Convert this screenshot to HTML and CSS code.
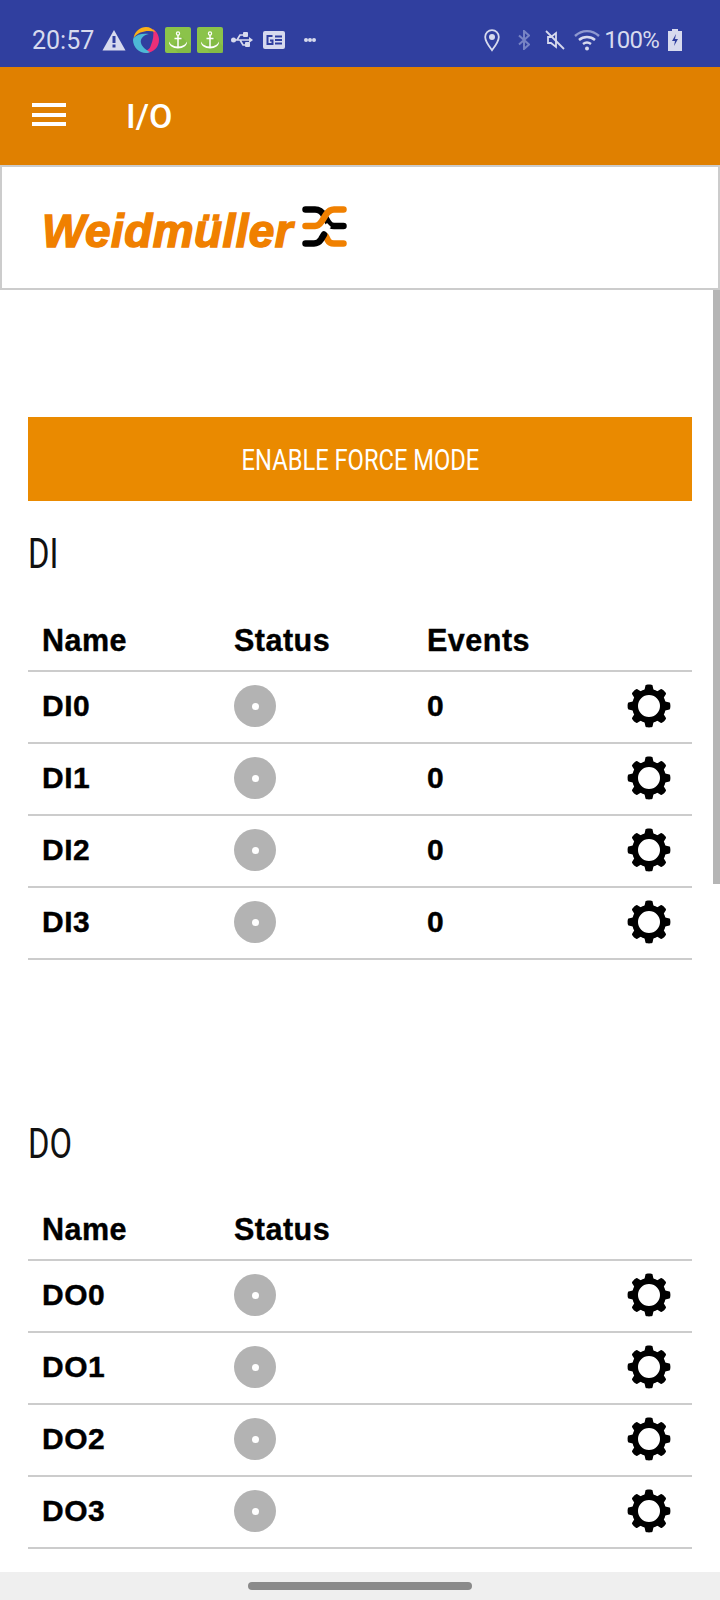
FILE: index.html
```html
<!DOCTYPE html>
<html lang="en">
<head>
    <meta charset="UTF-8">
    <meta name="viewport" content="width=device-width, initial-scale=1.0">
    <title>I/O</title>
    <link rel="stylesheet" href="styles.css">
</head>
<body>

<svg class="defs" width="0" height="0">
    <symbol id="gear" viewBox="0 0 44 44">
        <circle cx="22" cy="22" r="14" fill="none" stroke="#000" stroke-width="6"/>
        <g fill="#000">
            <path d="M17 8l1.500-6.500c.3-1.200 6.700-1.200 7 0L27 8z"/>
            <path d="M17 8l1.500-6.500c.3-1.200 6.700-1.200 7 0L27 8z" transform="rotate(45 22 22)"/>
            <path d="M17 8l1.500-6.500c.3-1.200 6.700-1.200 7 0L27 8z" transform="rotate(90 22 22)"/>
            <path d="M17 8l1.500-6.500c.3-1.200 6.700-1.200 7 0L27 8z" transform="rotate(135 22 22)"/>
            <path d="M17 8l1.500-6.500c.3-1.200 6.700-1.200 7 0L27 8z" transform="rotate(180 22 22)"/>
            <path d="M17 8l1.500-6.500c.3-1.200 6.700-1.200 7 0L27 8z" transform="rotate(225 22 22)"/>
            <path d="M17 8l1.500-6.500c.3-1.200 6.700-1.200 7 0L27 8z" transform="rotate(270 22 22)"/>
            <path d="M17 8l1.500-6.500c.3-1.200 6.700-1.200 7 0L27 8z" transform="rotate(315 22 22)"/>
        </g>
    </symbol>
    <symbol id="anchor" viewBox="0 0 26 26">
        <rect width="26" height="26" rx="2" fill="#8bc34a"/>
        <path d="M26 26H13L8 19l8-10 10 10z" fill="#7cb342" opacity=".5"/>
        <circle cx="13" cy="6.500" r="1.600" fill="none" stroke="#fff" stroke-width="1.200"/>
        <path d="M13 8v13M9.500 11.500h7" fill="none" stroke="#fff" stroke-width="1.500"/>
        <path d="M4 14.500c1 2 2 3 3 3.500 2 1 4 1.500 6 1.500s4-.5 6-1.500c1-.5 2-1.500 3-3.500 .5 4-4 7-9 7s-9.500-3-9-7z" fill="#fff"/>
    </symbol>
</svg>

<div class="status-bar">
    <span class="clock">20:57</span>
    <svg class="st-warn" width="24" height="22" viewBox="0 0 24 22"><path d="M12 1 23.500 21.500H.500z" fill="#d7daee"/><rect x="10.500" y="7" width="3" height="7" fill="#303f9f"/><rect x="10.500" y="15.500" width="3" height="3" fill="#303f9f"/></svg>
    <svg class="st-swirl" width="26" height="26" viewBox="0 0 26 26">
        <path d="M20 2c4 2.500 6 7 6 11 0 7-5 12-12 13-2 0-3-1-4-2 5 0 7-2.500 8-6 2-5 3-10 2-16z" fill="#ec2f78"/>
        <path d="M.500 11C2 4 7 0 13 0c4 0 7 2 9.500 5C15 3 6 4 .500 11z" fill="#fbb017"/>
        <path d="M.500 11C4 7 10 6 16 7 10 8 7 12 8 16c1 4 5 7 9 9-2 1-3 1-4 1C6 26 0 20 0 13z" fill="#4db9d6"/>
    </svg>
    <svg class="st-app" width="26" height="26"><use href="#anchor"/></svg>
    <svg class="st-app" width="26" height="26"><use href="#anchor"/></svg>
    <svg class="st-usb" width="22" height="16" viewBox="0 0 22 16"><path d="M2 8h18M6 8l3-5h4M9 8l3 5h3" fill="none" stroke="#d7daee" stroke-width="1.700"/><circle cx="2.500" cy="8" r="2.500" fill="#d7daee"/><rect x="12" y="0" width="5" height="5" rx="1" fill="#d7daee"/><rect x="14" y="10" width="5" height="5" rx="1" fill="#d7daee"/><path d="M18 5l4 3-4 3z" fill="#d7daee"/></svg>
    <svg class="st-news" width="22" height="18" viewBox="0 0 22 18"><rect width="22" height="18" rx="2" fill="#d7daee"/><rect x="12" y="4.500" width="7" height="2" fill="#303f9f"/><rect x="12" y="8" width="7" height="2" fill="#303f9f"/><rect x="12" y="11.500" width="7" height="2" fill="#303f9f"/><path d="M9.500 5H4.500v8h5V9.500H7" fill="none" stroke="#303f9f" stroke-width="2"/></svg>
    <svg class="st-more" width="12" height="6" viewBox="0 0 12 6"><circle cx="2" cy="3" r="2" fill="#d7daee"/><circle cx="6" cy="3" r="2" fill="#d7daee"/><circle cx="10" cy="3" r="2" fill="#d7daee"/></svg>
    <span class="status-space"></span>
    <svg class="st-pin" width="16" height="23" viewBox="0 0 16 23"><path d="M8 1.200c3.800 0 6.800 3 6.800 6.800 0 4.500-4 9.500-6.800 13.200C5.200 17.500 1.200 12.500 1.200 8 1.200 4.200 4.200 1.200 8 1.200z" fill="none" stroke="#d7daee" stroke-width="1.800"/><circle cx="8" cy="8" r="3" fill="#d7daee"/></svg>
    <svg class="st-bt" width="12" height="20" viewBox="0 0 12 20"><path d="M1 5.500l10 9L6 19V1l5 4.500-10 9" fill="none" stroke="#7884c4" stroke-width="2"/></svg>
    <svg class="st-mute" width="20" height="20" viewBox="0 0 20 20"><path d="M3 7v6h3l5 4V3L6 7z" fill="none" stroke="#d7daee" stroke-width="1.800"/><path d="M1 1l18 18" stroke="#d7daee" stroke-width="1.800"/></svg>
    <svg class="st-wifi" width="26" height="22" viewBox="0 0 26 22"><path d="M1 7c7-6.500 17-6.500 24 0" fill="none" stroke="#8f99d0" stroke-width="2.400"/><path d="M5 11c4.500-4 11.500-4 16 0M9 15c2.500-2 5.500-2 8 0" fill="none" stroke="#d7daee" stroke-width="2.400"/><circle cx="13" cy="19.500" r="2" fill="#d7daee"/></svg>
    <span class="battery-pct">100%</span>
    <svg class="st-batt" width="14" height="22" viewBox="0 0 14 22"><path d="M4 0h6v2h4v20H0V2h4z" fill="#d7daee"/><path d="M8 5 4 12h3l-1 5 4-7H7z" fill="#303f9f"/></svg>
</div>

<div class="app-bar">
    <div class="menu-icon"><span></span><span></span><span></span></div>
    <div class="app-title">I/O</div>
</div>

<div class="logo-box">
    <span class="logo-text">Weidmüller</span>
    <svg class="logo-mark" width="45" height="41" viewBox="0 0 45 41">
        <g fill="none" stroke-width="6.500" stroke-linecap="round">
            <path d="M3.500 3.500h9.500c4 0 7 2 9 6l4 6.500c1 2 3 4 6 4h9.500" stroke="#000"/>
            <path d="M41.500 3.500H32c-4 0-6 2-8 5l-4 6.500c-2 3-4 5-7 5H3.500" stroke="#f08000"/>
            <path d="M41.500 37.500H32c-3 0-5-1-6-3l-2-4" stroke="#f08000"/>
            <path d="M3.500 37.500H12c3 0 5-1 7-4l3-5" stroke="#000"/>
        </g>
        <path d="M25 17l4 4-4 4-4-4z" fill="#fff"/>
    </svg>
</div>

<div class="scroll-thumb"></div>

<div class="content">
    <button class="force-btn"><span class="narrow">ENABLE FORCE MODE</span></button>

    <h2 class="section-title"><span class="narrow">DI</span></h2>
    <table class="io-table">
        <tr><th class="col-name">Name</th><th class="col-status">Status</th><th class="col-events">Events</th><th></th></tr>
        <tr>
            <td>DI0</td>
            <td><span class="led"></span></td>
            <td>0</td>
            <td class="col-gear"><svg class="gear" width="44" height="44"><use href="#gear"/></svg></td>
        </tr>
        <tr>
            <td>DI1</td>
            <td><span class="led"></span></td>
            <td>0</td>
            <td class="col-gear"><svg class="gear" width="44" height="44"><use href="#gear"/></svg></td>
        </tr>
        <tr>
            <td>DI2</td>
            <td><span class="led"></span></td>
            <td>0</td>
            <td class="col-gear"><svg class="gear" width="44" height="44"><use href="#gear"/></svg></td>
        </tr>
        <tr>
            <td>DI3</td>
            <td><span class="led"></span></td>
            <td>0</td>
            <td class="col-gear"><svg class="gear" width="44" height="44"><use href="#gear"/></svg></td>
        </tr>
    </table>

    <h2 class="section-title section-do"><span class="narrow">DO</span></h2>
    <table class="io-table">
        <tr><th class="col-name">Name</th><th class="col-status">Status</th><th class="col-events"></th><th></th></tr>
        <tr>
            <td>DO0</td>
            <td><span class="led"></span></td>
            <td></td>
            <td class="col-gear"><svg class="gear" width="44" height="44"><use href="#gear"/></svg></td>
        </tr>
        <tr>
            <td>DO1</td>
            <td><span class="led"></span></td>
            <td></td>
            <td class="col-gear"><svg class="gear" width="44" height="44"><use href="#gear"/></svg></td>
        </tr>
        <tr>
            <td>DO2</td>
            <td><span class="led"></span></td>
            <td></td>
            <td class="col-gear"><svg class="gear" width="44" height="44"><use href="#gear"/></svg></td>
        </tr>
        <tr>
            <td>DO3</td>
            <td><span class="led"></span></td>
            <td></td>
            <td class="col-gear"><svg class="gear" width="44" height="44"><use href="#gear"/></svg></td>
        </tr>
    </table>
</div>

<div class="nav-bar"><div class="nav-pill"></div></div>

</body>
</html>
```
FILE: styles.css
```css
html, body {
    height: 1600px;
    overflow: hidden;
}
body {
    margin: 0;
    position: relative;
    display: flex;
    flex-direction: column;
    background-color: #ffffff;
    font-family: "Liberation Sans", Arial, sans-serif;
}
.defs {
    position: absolute;
}
.status-bar {
    height: 67px;
    flex: none;
    display: flex;
    align-items: center;
    padding: 13px 38px 0 32px;
    box-sizing: border-box;
    background-color: #303f9f;
    color: #d7daee;
    font-family: Roboto, sans-serif;
    font-size: 24px;
}
.status-space {
    flex: 1;
}
.clock {
    font-size: 25px;
    margin-right: 8px;
}
.st-swirl {
    margin-left: 7px;
}
.st-app {
    margin-left: 6px;
}
.st-usb {
    margin-left: 8px;
}
.st-news {
    margin-left: 10px;
}
.st-more {
    margin-left: 19px;
}
.st-bt {
    margin-left: 18px;
}
.st-mute {
    margin-left: 15px;
}
.st-wifi {
    margin-left: 9px;
}
.battery-pct {
    margin-left: 4px;
    letter-spacing: -0.800px;
}
.st-batt {
    margin-left: 9px;
}
.app-bar {
    height: 98px;
    flex: none;
    display: flex;
    align-items: center;
    background-color: #e08000;
    color: #fff;
    padding-left: 32px;
}
.menu-icon {
    width: 34px;
    margin-top: -3px;
    display: flex;
    flex-direction: column;
    gap: 5.500px;
}
.menu-icon span {
    height: 4px;
    background-color: #fff;
}
.app-title {
    margin-left: 60px;
    font-family: Roboto, sans-serif;
    font-size: 34px;
    font-weight: 500;
}
.logo-box {
    height: 125px;
    flex: none;
    box-sizing: border-box;
    border: 2px solid #cccccc;
    display: flex;
    align-items: center;
    padding-left: 40px;
    background-color: #fff;
}
.logo-text {
    color: #f08000;
    font-size: 46px;
    font-weight: bold;
    font-style: italic;
    -webkit-text-stroke: 1.500px #f08000;
    letter-spacing: 0.400px;
    margin-top: 6px;
}
.logo-mark {
    margin-left: 9px;
    margin-top: -3px;
}
.scroll-thumb {
    position: absolute;
    right: 0;
    top: 290px;
    width: 7px;
    height: 594px;
    background-color: #b5b5b5;
}
.content {
    flex: 1;
    padding: 127px 28px 0;
}
.narrow {
    display: inline-block;
}
.force-btn {
    display: block;
    width: 100%;
    height: 84px;
    border: none;
    background-color: #ea8a00;
    color: #fff;
    font-family: Roboto, sans-serif;
    font-size: 30px;
}
.force-btn .narrow {
    transform: scaleX(0.79);
}
.section-title {
    margin: 30px 0 39px;
    font-family: Roboto, sans-serif;
    font-weight: 400;
    font-size: 42px;
    line-height: 46px;
    color: #111;
}
.section-title .narrow {
    transform: scaleX(0.78);
    transform-origin: left center;
}
.section-do {
    margin-top: 161px;
    margin-bottom: 38px;
}
.io-table {
    width: 100%;
    border-collapse: collapse;
    table-layout: fixed;
    color: #000;
    font-size: 30px;
    font-weight: bold;
    letter-spacing: 0.500px;
    -webkit-text-stroke: 0.400px #000;
}
.io-table th {
    height: 55px;
    text-align: left;
    padding: 0 0 6px 14px;
    box-sizing: border-box;
    font-size: 30.500px;
}
.io-table td {
    height: 68px;
    padding: 0 0 2px 14px;
    border-top: 2px solid #cccccc;
}
.io-table tr:last-child td {
    border-bottom: 2px solid #cccccc;
}
.col-name {
    width: 192px;
}
.col-status {
    width: 193px;
}
.col-events {
    width: 171px;
}
.io-table .col-gear {
    padding: 0 0 2px 22px;
    text-align: center;
    line-height: 0;
}
.led {
    display: block;
    position: relative;
    width: 42px;
    height: 42px;
    border-radius: 50%;
    background-color: #b3b3b3;
}
.led::after {
    content: "";
    position: absolute;
    left: 17.500px;
    top: 17.500px;
    width: 7px;
    height: 7px;
    border-radius: 50%;
    background-color: #fff;
}
.nav-bar {
    height: 28px;
    flex: none;
    display: flex;
    justify-content: center;
    padding-top: 10px;
    box-sizing: border-box;
    background-color: #efefef;
}
.nav-pill {
    width: 224px;
    height: 8px;
    border-radius: 4px;
    background-color: #8a8a8a;
}
```
